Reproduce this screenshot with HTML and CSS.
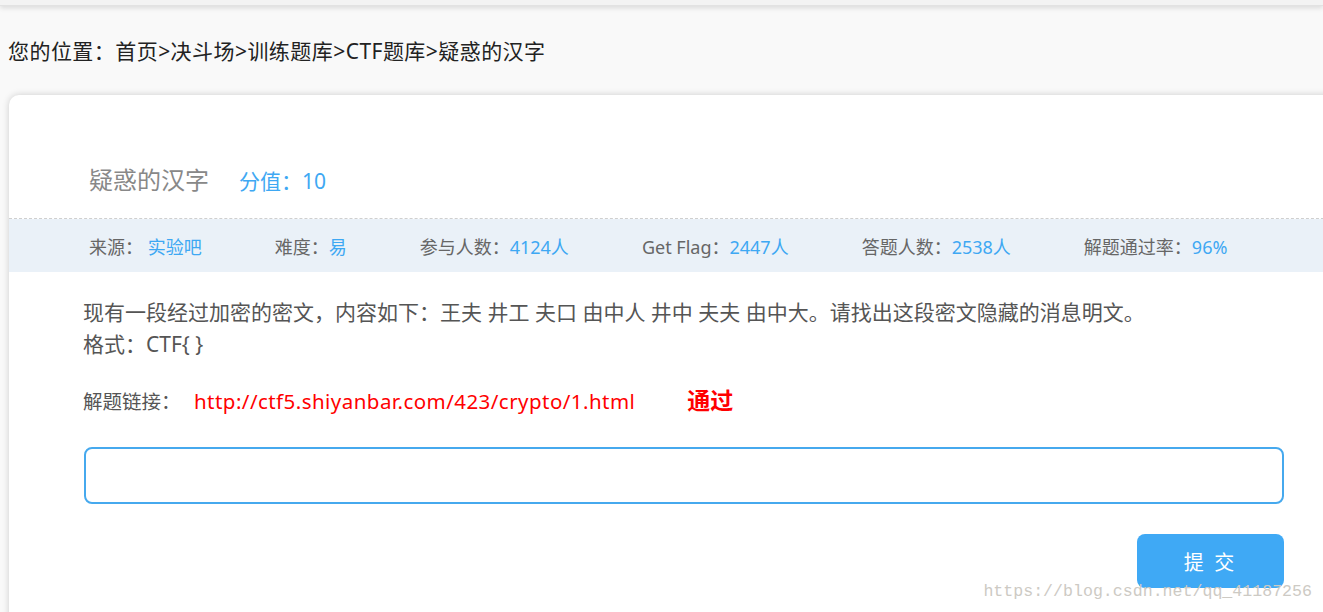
FILE: index.html
```html
<!DOCTYPE html>
<html lang="zh-CN">
<head>
<meta charset="utf-8">
<title>疑惑的汉字</title>
<link rel="stylesheet" href="styles.css">
</head>
<body>
<div class="topbar"></div>
<div class="crumb">您的位置：首页&gt;决斗场&gt;训练题库&gt;CTF题库&gt;疑惑的汉字</div>
<div class="card">
  <div class="card-head">
    <span class="title">疑惑的汉字</span>
    <span class="score">分值：10</span>
  </div>
  <div class="info">
    <span class="item">来源： <b>实验吧</b></span>
    <span class="item">难度：<b>易</b></span>
    <span class="item">参与人数：<b>4124人</b></span>
    <span class="item">Get Flag：<b>2447人</b></span>
    <span class="item">答题人数：<b>2538人</b></span>
    <span class="item">解题通过率：<b>96%</b></span>
  </div>
  <div class="body">
    <p class="desc">现有一段经过加密的密文，内容如下：王夫 井工 夫口 由中人 井中 夫夫 由中大。请找出这段密文隐藏的消息明文。<br>格式：CTF{ }</p>
    <p class="link-row"><span class="link-label">解题链接：</span><a class="link" href="#">http://ctf5.shiyanbar.com/423/crypto/1.html</a><span class="pass">通过</span></p>
    <div class="answer"></div>
    <div class="actions"><button class="submit">提 交</button></div>
  </div>
</div>
<div class="watermark">https://blog.csdn.net/qq_41187256</div>
</body>
</html>
```
FILE: styles.css
```css
html, body {
  margin: 0;
  padding: 0;
}
body {
  background: #f9f9f9;
  font-family: "Noto Sans", "Noto Sans CJK SC", sans-serif;
  overflow: hidden;
  width: 1323px;
  height: 612px;
  position: relative;
}
.topbar {
  height: 5px;
  background: #f3f3f3;
  box-shadow: 0 2px 5px rgba(0, 0, 0, 0.13);
  border-bottom: 1px solid #e2e2e2;
}
.crumb {
  margin-top: 29px;
  padding-left: 8px;
  font-size: 21px;
  line-height: 32px;
  color: #222;
  letter-spacing: 0.45px;
}
.card {
  margin-top: 28px;
  margin-left: 9px;
  width: 1340px;
  height: 540px;
  background: #fff;
  border-radius: 10px;
  box-shadow: 0 0 7px rgba(0, 0, 0, 0.18);
}
.card-head {
  height: 124px;
  box-sizing: border-box;
  padding: 69px 0 0 80px;
  border-bottom: 1px dashed #cfcfcf;
  display: flex;
  align-items: baseline;
}
.title {
  font-size: 24px;
  line-height: 32px;
  color: #888;
}
.score {
  margin-left: 30px;
  font-size: 21px;
  line-height: 32px;
  color: #3ea8f3;
}
.info {
  height: 53px;
  background: #eaf1f8;
  padding-left: 80px;
  display: flex;
  align-items: center;
  gap: 73px;
  font-size: 18px;
  color: #666;
}
.item b {
  font-weight: normal;
  color: #3ea8f3;
}
.body {
  margin-left: 74px;
  width: 1201px;
}
.desc {
  margin: 24px 0 0;
  font-size: 21px;
  line-height: 32px;
  color: #555;
}
.link-row {
  margin: 24px 0 0;
  font-size: 19.5px;
  line-height: 32px;
  display: flex;
  align-items: baseline;
}
.link-label {
  color: #555;
  width: 111px;
}
.link {
  color: #f00;
  text-decoration: none;
  font-size: 20.5px;
  letter-spacing: 0.45px;
}
.pass {
  margin-left: 52px;
  color: #f00;
  font-weight: bold;
  font-size: 23px;
}
.answer {
  margin: 29px 0 0 1px;
  height: 57px;
  box-sizing: border-box;
  border: 2px solid #46a9ee;
  border-radius: 8px;
}
.actions {
  margin-top: 30px;
  display: flex;
  justify-content: flex-end;
}
.submit {
  width: 147px;
  height: 54px;
  border: none;
  border-radius: 8px;
  background: #3fa9f5;
  color: #fff;
  font-family: "Noto Sans CJK SC", sans-serif;
  font-size: 20px;
  letter-spacing: 3px;
  padding-left: 6px;
}
.watermark {
  position: absolute;
  right: 11px;
  top: 581px;
  font-family: "Liberation Mono", "DejaVu Sans Mono", monospace;
  font-size: 16.6px;
  line-height: 22px;
  color: #cdcac4;
}
```
